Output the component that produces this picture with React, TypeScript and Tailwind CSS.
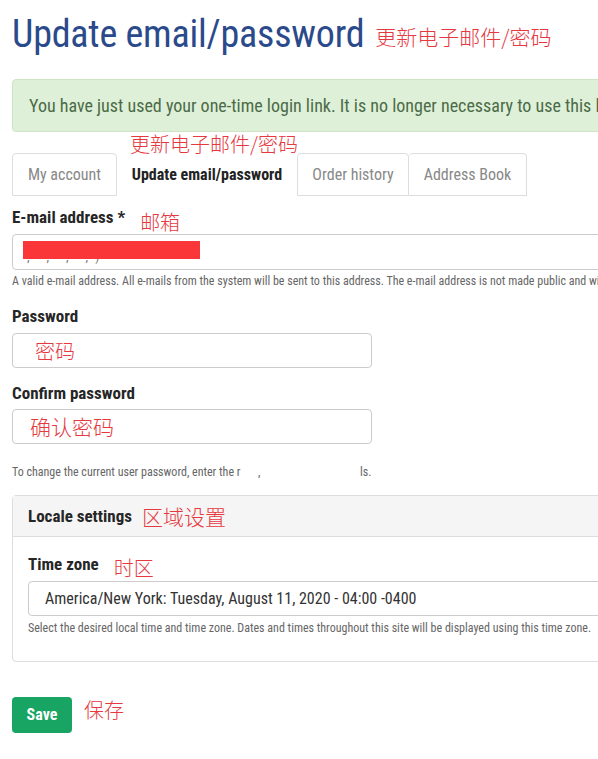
import React from 'react'

const cn = { fontFamily: '"Noto Sans CJK SC", sans-serif' }
const body = { fontFamily: '"Roboto Condensed", "Liberation Sans Narrow", Roboto, sans-serif' }

function Note({ children, className = '' }: { children: React.ReactNode; className?: string }) {
  return (
    <span style={cn} className={`whitespace-nowrap font-light tracking-normal text-[#e5383f] ${className}`}>
      {children}
    </span>
  )
}

function Label({ children }: { children: React.ReactNode }) {
  return <span className="text-[17px] font-bold leading-[20px] text-[#262626]">{children}</span>
}

export default function App() {
  return (
    <div style={body} className="h-[759px] w-[598px] overflow-hidden bg-white text-[#333]">
      <div className="flex items-end pl-3 pt-[11px]">
        <h1 className="whitespace-nowrap text-[38px] leading-[46px] tracking-[-0.2px] text-[#2b4a8b]">Update email/password</h1>
        <Note className="mb-[8px] ml-[11px] text-[21px] leading-[26px]">更新电子邮件/密码</Note>
      </div>

      <div className="ml-3 mt-[22px] flex h-[53px] w-[720px] items-center whitespace-nowrap rounded border border-[#cfe3c6] bg-[#dff0d8] pl-4 text-[18px] text-[#4b6b48]">
        You have just used your one-time login link. It is no longer necessary to use this link to log in.
      </div>

      <div className="relative ml-3 mt-[21px] flex h-[43px] items-stretch whitespace-nowrap text-[16px]">
        <Note className="absolute -top-[20px] left-[118px] text-[20px] leading-[22px]">更新电子邮件/密码</Note>
        <div className="flex w-[105px] items-center justify-center rounded-t border border-[#ddd] text-[#888]">My account</div>
        <div className="flex w-[180px] items-center justify-center font-bold text-[#222]">Update email/password</div>
        <div className="flex w-[112px] items-center justify-center rounded-t border border-[#ddd] text-[#888]">Order history</div>
        <div className="flex w-[118px] items-center justify-center rounded-t border border-l-0 border-[#ddd] text-[#888]">Address Book</div>
      </div>

      <div className="px-3">
        <div className="mt-[11px] flex h-[20px] items-center">
          <Label>E-mail address *</Label>
          <Note className="relative top-[5px] ml-[15px] text-[20px] leading-[20px]">邮箱</Note>
        </div>
        <div className="relative mt-[7px] h-[36px] w-[720px] rounded border border-[#ccc]">
          <span className="absolute left-[14px] top-[12px] text-[13px] tracking-[7px] text-[#777]">, , , ,)</span>
          <div className="absolute left-[10px] top-[6px] h-[18px] w-[177px] bg-[#fb3639]" />
        </div>
        <p className="mt-[4px] whitespace-nowrap text-[12px] leading-[14px] text-[#666]">
          A valid e-mail address. All e-mails from the system will be sent to this address. The e-mail address is not made public and will only be used if you wish to receive a new password.
        </p>

        <div className="mt-[18px] flex h-[20px] items-center">
          <Label>Password</Label>
        </div>
        <div className="mt-[7px] flex h-[35px] w-[360px] items-center rounded border border-[#ccc] pl-[22px]">
          <Note className="text-[20px]">密码</Note>
        </div>

        <div className="mt-[15px] flex h-[20px] items-center">
          <Label>Confirm password</Label>
        </div>
        <div className="mt-[6px] flex h-[35px] w-[360px] items-center rounded border border-[#ccc] pl-[17px]">
          <Note className="text-[21px]">确认密码</Note>
        </div>

        <p className="mt-[21px] flex whitespace-nowrap text-[12px] leading-[14px] text-[#666]">
          <span className="w-[246px] overflow-hidden">To change the current user password, enter the r</span>
          <span className="w-[102px]">,</span>
          <span>ls.</span>
        </p>

        <div className="mt-[16px] w-[720px] rounded border border-[#ddd]">
          <div className="flex h-[41px] items-center border-b border-[#ddd] bg-[#f5f5f5] px-[15px]">
            <Label>Locale settings</Label>
            <Note className="ml-[10px] text-[21px] leading-[24px]">区域设置</Note>
          </div>
          <div className="px-[15px] pb-[26px] pt-[17px]">
            <div className="flex h-[20px] items-center">
              <Label>Time zone</Label>
              <Note className="relative top-[4px] ml-[15px] text-[20px] leading-[20px]">时区</Note>
            </div>
            <div className="mt-[7px] flex h-[35px] items-center whitespace-nowrap rounded border border-[#ccc] pl-4 text-[16px] text-[#333]">
              America/New York: Tuesday, August 11, 2020 - 04:00 -0400
            </div>
            <p className="mt-[5px] whitespace-nowrap text-[12px] leading-[14px] text-[#666]">
              Select the desired local time and time zone. Dates and times throughout this site will be displayed using this time zone.
            </p>
          </div>
        </div>

        <div className="mt-[35px] flex items-start">
          <button type="button" className="h-[36px] w-[60px] rounded bg-[#18a563] text-[16px] font-bold text-white">
            Save
          </button>
          <Note className="ml-[12px] text-[20px] leading-[26px]">保存</Note>
        </div>
      </div>
    </div>
  )
}
